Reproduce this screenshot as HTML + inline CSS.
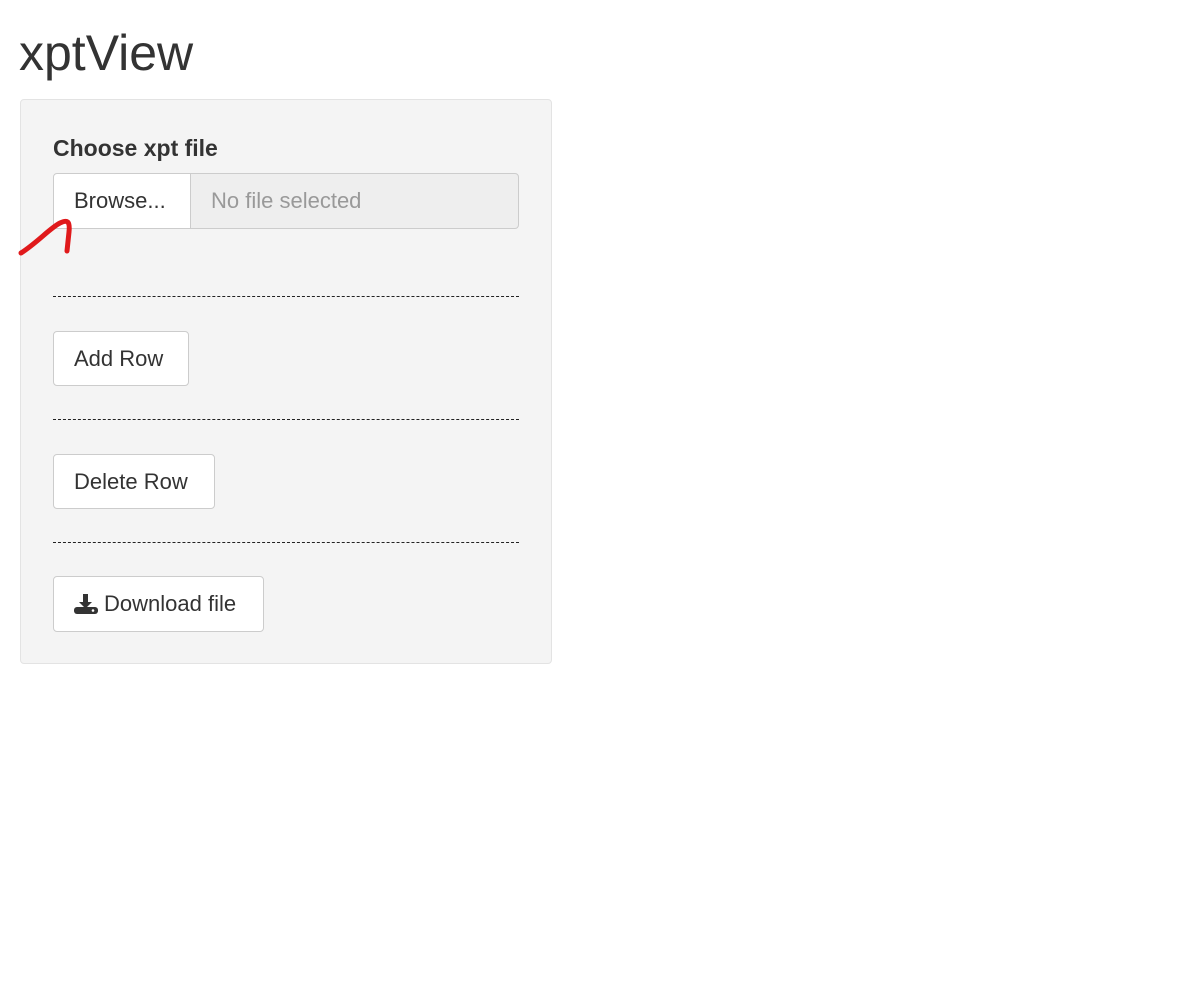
<!DOCTYPE html>
<html><head><style>
body{margin:0;background:#fff;font-family:"Liberation Sans",Arial,sans-serif;color:#333;width:1200px;height:989px;position:relative;overflow:hidden}
h1{position:absolute;left:19px;top:25px;margin:0;font-size:50px;font-weight:400;line-height:56px}
.panel{position:absolute;left:20px;top:99px;width:530px;height:563px;background:#f4f4f4;border:1px solid #e3e3e3;border-radius:4px}
.lbl{position:absolute;left:53px;top:135px;font-weight:bold;font-size:23px}
.btn{position:absolute;background:#fff;border:1px solid #ccc;border-radius:4px;font-size:22px;box-sizing:border-box;display:flex;align-items:center;padding-left:20px;color:#333}
.fn{position:absolute;left:190px;top:173px;width:329px;height:56px;box-sizing:border-box;background:#eee;border:1px solid #ccc;border-radius:0 4px 4px 0;color:#999;font-size:22px;padding-left:20px;display:flex;align-items:center}
.hr{position:absolute;left:53px;width:466px;border-top:1px dashed #222}
</style></head><body>
<h1>xptView</h1>
<div class="panel"></div>
<div class="lbl">Choose xpt file</div>
<div class="btn" style="left:53px;top:173px;width:138px;height:56px;border-radius:4px 0 0 4px">Browse...</div>
<div class="fn">No file selected</div>
<div class="hr" style="top:296px"></div>
<div class="btn" style="left:53px;top:331px;width:136px;height:55px">Add Row</div>
<div class="hr" style="top:419px"></div>
<div class="btn" style="left:53px;top:454px;width:162px;height:55px">Delete Row</div>
<div class="hr" style="top:542px"></div>
<div class="btn" style="left:53px;top:576px;width:211px;height:56px"><svg width="24" height="22" viewBox="0 0 24 22" style="margin-right:6px"><path d="M9 1h5v8h4l-6.5 6.5L5 9h4z" fill="#333"/><rect x="0" y="14" width="24" height="7" rx="3" fill="#333"/><circle cx="19" cy="17.5" r="1.3" fill="#fff"/></svg>Download file</div>
<svg style="position:absolute;left:0;top:0" width="100" height="270"><path d="M21,253 C38,242 50,228 60,223 C68,219 70,222 69,232 L67,251" fill="none" stroke="#e0191b" stroke-width="5" stroke-linecap="round" stroke-linejoin="round"/></svg>
</body></html>
